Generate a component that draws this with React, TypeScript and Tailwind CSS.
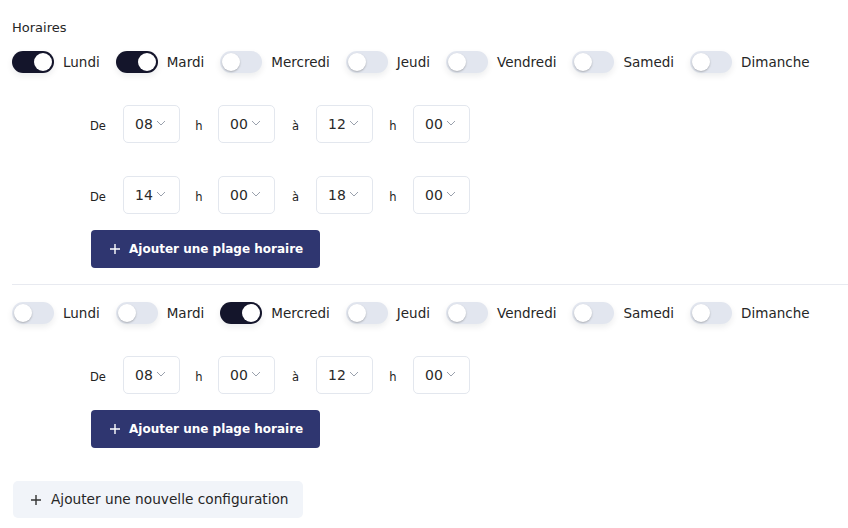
import React, { useState } from 'react'

const DAYS = ['Lundi', 'Mardi', 'Mercredi', 'Jeudi', 'Vendredi', 'Samedi', 'Dimanche']

type Slot = { fromH: string; fromM: string; toH: string; toM: string }
type Config = { days: boolean[]; slots: Slot[] }

function Toggle({ on, onClick }: { on: boolean; onClick: () => void }) {
  return (
    <button
      onClick={onClick}
      className={`relative w-[42px] h-[22px] rounded-full shrink-0 shadow-[0_3px_6px_rgba(15,23,42,0.08)] ${
        on ? 'bg-[#14152b]' : 'bg-[#e2e6ef]'
      }`}
    >
      <span
        className={`absolute top-[2px] w-[18px] h-[18px] rounded-full bg-white ${
          on ? 'left-[22px]' : 'left-[2px] shadow-[0_1px_2px_rgba(0,0,0,0.25)]'
        }`}
      />
    </button>
  )
}

function Chevron() {
  return (
    <svg width="10" height="6" viewBox="0 0 10 6" className="ml-[3px] mt-[-3px]">
      <path d="M1 1l4 4l4-4" fill="none" stroke="#9aa1ad" strokeWidth="1" />
    </svg>
  )
}

function TimeSelect({ value }: { value: string }) {
  return (
    <div className="w-[57px] h-[38px] rounded-[5px] border border-[#e3e7ee] bg-white flex items-center pl-[11px] text-[14px] text-[#2a2a2a]">
      <span>{value}</span>
      <Chevron />
    </div>
  )
}

function SlotRow({ slot }: { slot: Slot }) {
  return (
    <div className="flex items-center text-[11.5px] text-[#222]">
      <span className="w-[33px] pt-[5px]">De</span>
      <TimeSelect value={slot.fromH} />
      <span className="w-[38px] pt-[5px] text-center">h</span>
      <TimeSelect value={slot.fromM} />
      <span className="w-[41px] pt-[5px] text-center">à</span>
      <TimeSelect value={slot.toH} />
      <span className="w-[40px] pt-[5px] text-center">h</span>
      <TimeSelect value={slot.toM} />
    </div>
  )
}

function Plus({ color }: { color: string }) {
  return (
    <svg width="10" height="10" viewBox="0 0 10 10">
      <path d="M5 0v10M0 5h10" stroke={color} strokeWidth="1.4" />
    </svg>
  )
}

export default function App() {
  const [configs, setConfigs] = useState<Config[]>([
    {
      days: [true, true, false, false, false, false, false],
      slots: [
        { fromH: '08', fromM: '00', toH: '12', toM: '00' },
        { fromH: '14', fromM: '00', toH: '18', toM: '00' },
      ],
    },
    {
      days: [false, false, true, false, false, false, false],
      slots: [{ fromH: '08', fromM: '00', toH: '12', toM: '00' }],
    },
  ])

  const toggleDay = (ci: number, di: number) => {
    setConfigs((prev) =>
      prev.map((c, i) =>
        i === ci ? { ...c, days: c.days.map((d, j) => (j === di ? !d : d)) } : c
      )
    )
  }

  return (
    <div
      className="w-[848px] h-[528px] bg-white pl-3 pt-[18px] text-[#262626] overflow-hidden"
      style={{ fontFamily: '"DejaVu Sans", Verdana, sans-serif' }}
    >
      <div className="text-[13px] leading-5">Horaires</div>

      {configs.map((config, ci) => (
        <div key={ci}>
          {ci > 0 && <div className="h-px bg-[#e8eaf0] mt-4" />}
          <div className={`flex items-center ${ci > 0 ? 'mt-[17px]' : 'mt-[13px]'}`}>
            {DAYS.map((day, di) => (
              <div key={day} className="flex items-center gap-[9px] mr-[16px]">
                <Toggle on={config.days[di]} onClick={() => toggleDay(ci, di)} />
                <span className="text-[13.5px] leading-5">{day}</span>
              </div>
            ))}
          </div>

          <div className="pl-[78px] mt-8">
            <div className="flex flex-col gap-[33px]">
              {config.slots.map((slot, si) => (
                <SlotRow key={si} slot={slot} />
              ))}
            </div>
            <button className="mt-4 h-[38px] w-[229px] ml-px rounded-[4px] bg-[#2f3670] text-white text-[12px] font-bold flex items-center gap-[9px] pl-[19px]">
              <Plus color="#ffffff" />
              <span>Ajouter une plage horaire</span>
            </button>
          </div>
        </div>
      ))}

      <button className="mt-[33px] ml-px h-[37px] w-[290px] rounded-[5px] bg-[#f1f4f9] text-[#262626] text-[13.7px] flex items-center gap-[10px] pl-[18px]">
        <Plus color="#333333" />
        <span>Ajouter une nouvelle configuration</span>
      </button>
    </div>
  )
}
